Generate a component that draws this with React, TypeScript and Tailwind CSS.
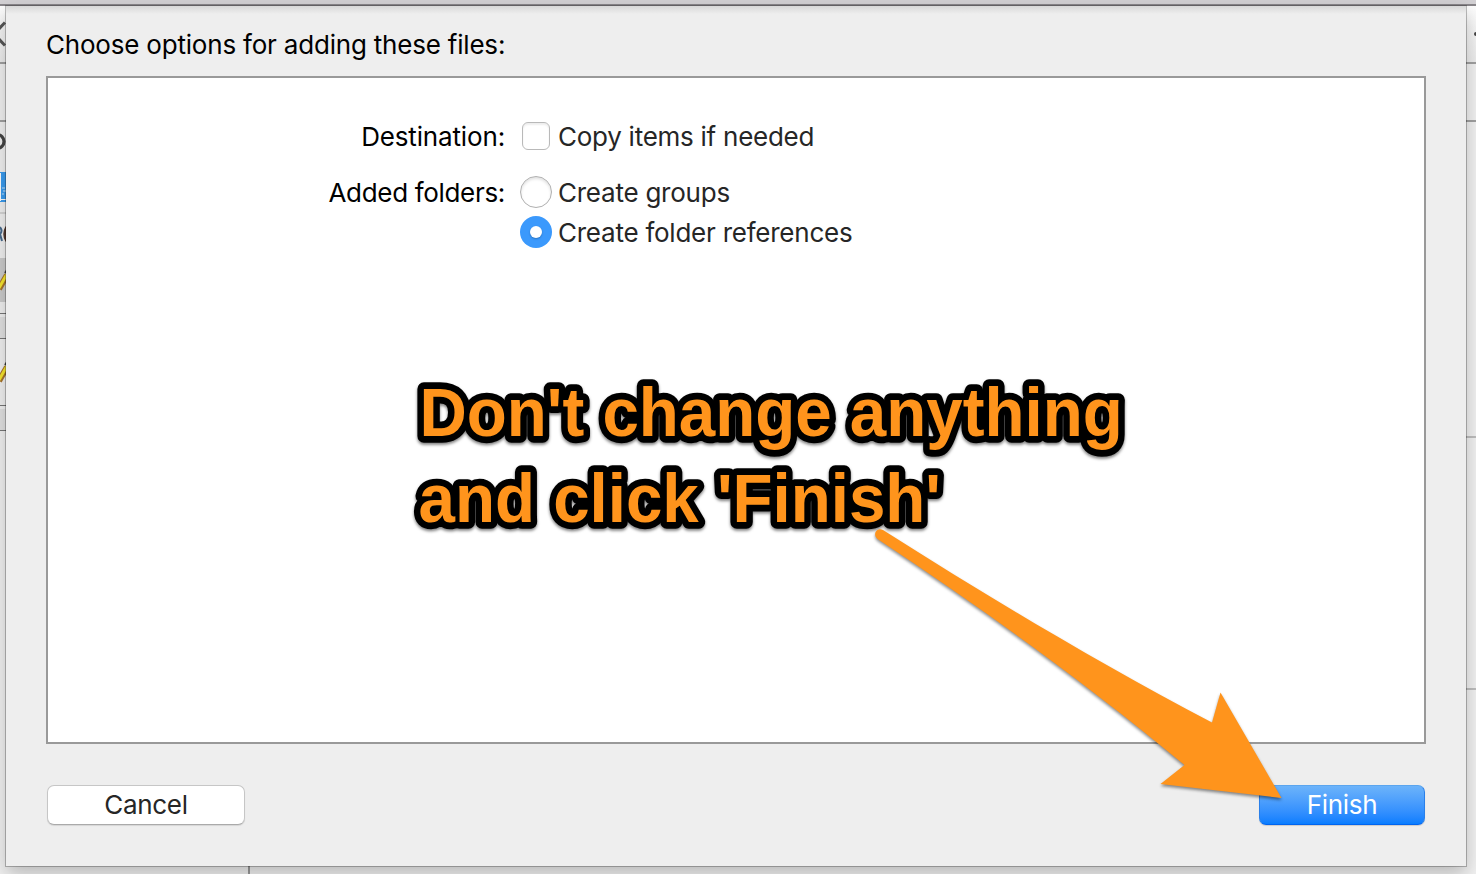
import React from "react";

const ui = "whitespace-nowrap font-['Inter',sans-serif] text-[26px] leading-[32px]";

function LeftStrip() {
  return (
    <div className="w-[6px] shrink-0 overflow-hidden bg-[#f1f1f1]">
      <svg className="block" width="6" height="860" viewBox="0 6 6 860">
        <defs>
          <linearGradient id="tb" x1="0" y1="0" x2="0" y2="1">
            <stop offset="0" stopColor="#fdfdfd" />
            <stop offset="1" stopColor="#ececec" />
          </linearGradient>
        </defs>
        <rect x="0" y="6" width="6" height="56" fill="url(#tb)" />
        <path d="M5 22.5 L-6 34 L5 45.5" fill="none" stroke="#555" strokeWidth="3" />
        <rect x="0" y="62" width="6" height="2" fill="#a0a0a0" />
        <rect x="0" y="120" width="6" height="2" fill="#a0a0a0" />
        <ellipse cx="-3" cy="141.5" rx="7" ry="7" fill="none" stroke="#444" strokeWidth="3.2" />
        <rect x="0" y="172" width="6" height="30" fill="#3a9cf0" />
        <rect x="0" y="173" width="1" height="28" fill="#fff" />
        <path d="M2 188h3M3 191h3M2 194h2" stroke="#c4e2fb" />
        <rect x="0" y="199" width="6" height="1" fill="#fff" />
        <rect x="0" y="212" width="6" height="2" fill="#d5d5d5" />
        <path d="M0 227q3 4 0 7l2 7" fill="none" stroke="#46698c" strokeWidth="2" />
        <path d="M7 227q-4 7 0 14" fill="none" stroke="#543a30" strokeWidth="3.5" />
        <rect x="0" y="258" width="6" height="44" fill="#cccccc" />
        <path d="M-1 289L7 275" stroke="#a8742c" strokeWidth="6" />
        <path d="M-1 288L7 274" stroke="#f8e62c" strokeWidth="3" />
        <path d="M5 273L7 270" stroke="#444" strokeWidth="2" />
        <rect x="0" y="313" width="6" height="1" fill="#777" />
        <rect x="0" y="317" width="6" height="21" fill="#e2e2e2" />
        <rect x="0" y="338" width="6" height="1" fill="#777" />
        <path d="M-1 381L7 367" stroke="#a8742c" strokeWidth="6" />
        <path d="M-1 380L7 366" stroke="#f8e62c" strokeWidth="3" />
        <path d="M5 365L7 362" stroke="#444" strokeWidth="2" />
        <rect x="0" y="405" width="6" height="1" fill="#777" />
        <rect x="0" y="409" width="6" height="21" fill="#e2e2e2" />
        <rect x="0" y="430" width="6" height="1" fill="#777" />
      </svg>
    </div>
  );
}

function RightStrip() {
  return (
    <div className="flex w-[10px] shrink-0 flex-col bg-[#f1f1f1]">
      <div className="h-[56px] bg-linear-to-b from-[#fdfdfd] to-[#ececec]">
        <svg className="block" width="10" height="56" viewBox="0 0 10 56">
          <circle cx="10" cy="28" r="2" fill="#444" />
        </svg>
      </div>
      <div className="h-[58px] border-t-2 border-[#a0a0a0]" />
      <div className="h-[316px] border-t-2 border-[#a0a0a0]" />
      <div className="h-[252px] border-t-2 border-[#bdbdbd]" />
      <div className="grow border-t-2 border-[#bdbdbd]" />
    </div>
  );
}

function Options() {
  return (
    <div className="flex flex-col pt-[41px]">
      <div className="flex h-[34px] items-center">
        <div className={`${ui} w-[457px] pt-px text-right tracking-[-0.15px] text-black`}>Destination:</div>
        <div className="ml-[17px] size-[28px] rounded-[6px] border border-[#b9b9b9] bg-white shadow-[inset_0_2px_2px_rgba(0,0,0,0.07)]" />
        <div className={`${ui} ml-[8px] pt-px tracking-[-0.26px] text-[#262626]`}>Copy items if needed</div>
      </div>
      <div className="mt-[21px] flex h-[36px] items-center">
        <div className={`${ui} w-[457px] pt-[2px] text-right tracking-[-0.32px] text-black`}>Added folders:</div>
        <div className="ml-[15px] size-[32px] rounded-full border border-[#b0b0b0] bg-white shadow-[inset_0_2px_3px_rgba(0,0,0,0.12)]" />
        <div className={`${ui} ml-[6px] pt-[2px] tracking-[-0.24px] text-[#262626]`}>Create groups</div>
      </div>
      <div className="mt-[4px] flex h-[36px] items-center pl-[472px]">
        <div className="flex size-[32px] items-center justify-center rounded-full bg-[#3b99fc]">
          <div className="size-[12px] rounded-full bg-white shadow-[0_1px_2px_rgba(0,0,0,0.25)]" />
        </div>
        <div className={`${ui} ml-[6px] pt-[2px] tracking-[-0.24px] text-[#262626]`}>Create folder references</div>
      </div>
    </div>
  );
}

function Annotation() {
  return (
    <svg className="absolute left-0 top-0" width="1476" height="874" viewBox="0 0 1476 874">
      <g
        className="fill-[#ff941c] stroke-black font-['Liberation_Sans',sans-serif] text-[65.5px] font-bold drop-shadow-[0_2px_1.5px_rgba(0,0,0,0.5)] [paint-order:stroke_fill]"
        strokeWidth="13"
        strokeLinejoin="round"
      >
        <text transform="translate(419.5 435.5) scale(1 1.04)">Don't change anything</text>
        <text transform="translate(418.5 521.5) scale(1 1.04)">and click 'Finish'</text>
      </g>
      <path
        className="drop-shadow-[0_2px_1.5px_rgba(0,0,0,0.45)]"
        d="M883 530 C990 598 1100 664 1212 722.5 L1220.5 692.5 L1281.5 798 L1160.5 784 L1184.5 765 C1092 688 985 610 877.5 539 C872 534 877 527 883 530Z"
        fill="#ff941c"
      />
    </svg>
  );
}

export default function App() {
  return (
    <div className="relative flex h-[874px] w-[1476px] flex-col overflow-hidden bg-[#f1f1f1]">
      <div className="h-[6px] shrink-0 border-b-2 border-[#89868a] bg-[#d2d0d3]" />
      <div className="flex h-[860px] shrink-0">
        <LeftStrip />
        <div className="relative flex w-[1460px] shrink-0 flex-col bg-[#eeeeee] px-[40px] shadow-[0_0_0_1px_rgba(0,0,0,0.25),0_8px_18px_rgba(0,0,0,0.24)]">
          <div className="-mx-[40px] h-[8px] bg-linear-to-b from-[#d8d8d8] to-[#eeeeee]" />
          <div className={`${ui} mt-[15px] tracking-[-0.2px] text-black`}>Choose options for adding these files:</div>
          <div className="mt-[15px] h-[668px] border-2 border-[#999999] bg-white">
            <Options />
          </div>
          <div className="mt-[41px] flex justify-between px-px">
            <button className={`${ui} h-[40px] w-[198px] rounded-[7px] border border-[#c6c6c6] border-b-[#aaaaaa] bg-white tracking-[-0.3px] text-[#262626] shadow-[0_1px_1px_rgba(0,0,0,0.1)]`}>Cancel</button>
            <button className={`${ui} h-[40px] w-[166px] rounded-[7px] border border-[#2a80ea] border-t-[#5ba5ee] border-b-[#0064f0] bg-linear-to-b from-[#6cb3fa] to-[#067dff] tracking-[-0.3px] text-white shadow-[0_1px_1px_rgba(0,0,0,0.15)]`}>Finish</button>
          </div>
        </div>
        <RightStrip />
      </div>
      <div className="flex h-[8px] shrink-0">
        <div className="w-[250px] border-r-2 border-[#999]" />
      </div>
      <Annotation />
    </div>
  );
}
